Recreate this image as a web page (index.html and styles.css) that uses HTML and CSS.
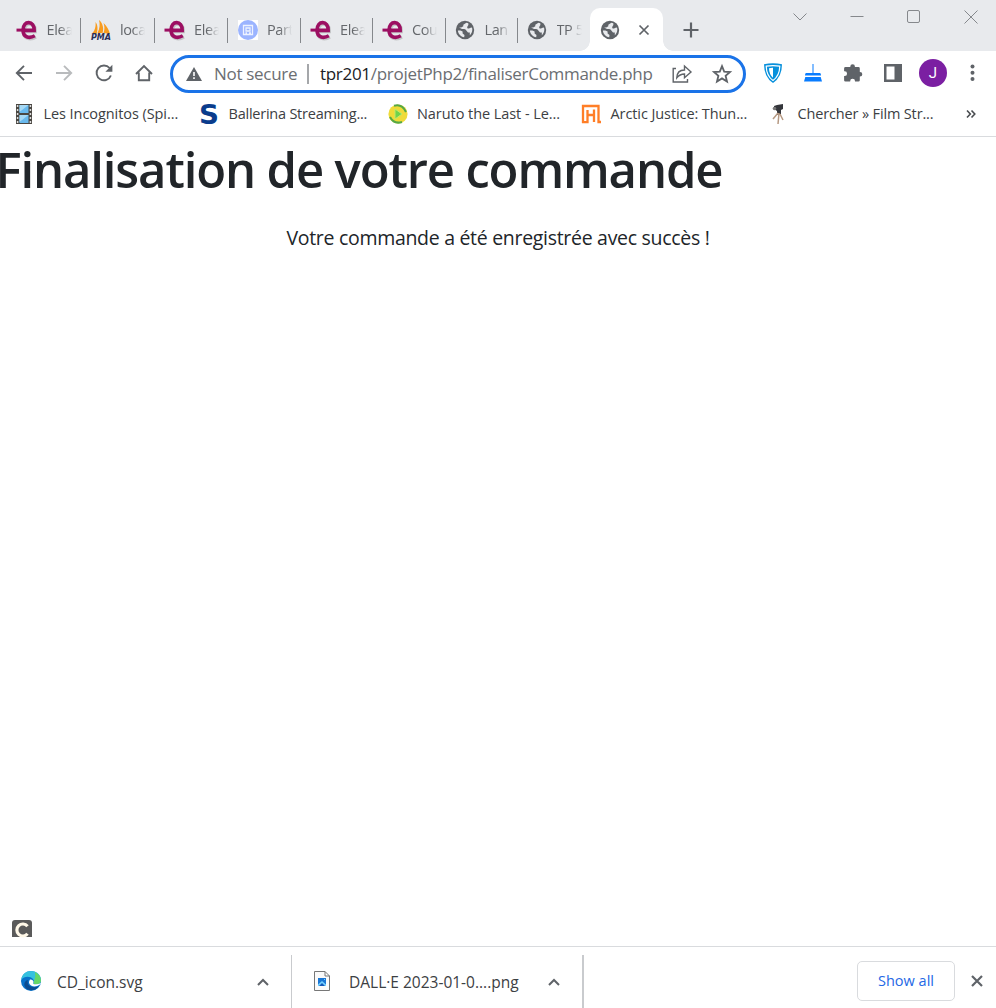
FILE: index.html
```html
<!DOCTYPE html>
<html lang="fr">
<head>
<meta charset="utf-8">
<title>Finalisation de votre commande</title>
<link rel="stylesheet" href="styles.css">
</head>
<body>
<svg class="defs" width="0" height="0">
  <symbol id="elea" viewBox="0 0 22 22">
    <g fill="none" stroke="#999" stroke-opacity=".45" transform="translate(.8 1)"><path d="M7 11.200H18.200C18.600 1.200 7 1.200 7 11.200C7 19.500 14.500 19.500 19 16.800" stroke-width="4"/></g>
    <g fill="none" stroke="#9c0f62"><path d="M6.500 11.400H18.200C18.600 1.400 7 .8 7 11.100C7 19.500 14.300 19.300 18.800 16.800" stroke-width="3.600"/><path d="M.5 11.100h9" stroke-width="3"/></g>
  </symbol>
  <symbol id="globe" viewBox="0 0 20 20">
    <circle cx="10" cy="10" r="9.200" fill="#5f6368"/>
    <path fill="#e8eaed" d="M11.400 2.700L8.300 4.700V6.300L6.200 7.600H4.100L7 9.100C8.800 9 10.500 9 11.500 10.800L13 12.600H14.800V15.300C17.700 12.300 17.700 8.700 16.800 7.400C15 7.400 14.800 8.500 13.100 8.600C11.700 8.600 12 6.500 13.400 5.100L13.300 3.300ZM2.900 10.600C3 13.800 5.700 16.800 9.200 17.300L9.500 14.900L7.600 13.600V11.500L5.400 10.600Z"/>
  </symbol>
  <symbol id="caret" viewBox="0 0 12 8"><path d="M1 7L6 2L11 7" fill="none" stroke="#5f6368" stroke-width="2"/></symbol>
</svg>
<div class="window">
  <header class="tabstrip">
    <div class="tabs">
      <div class="tab first"><svg class="fav"><use href="#elea"/></svg><span class="label">Elea</span></div>
      <div class="tab"><svg class="fav" viewBox="0 0 22 22"><path fill="#f89c1f" d="M1.500 15C5 12 6 7 5.500 3C8 6 8 11 6.500 15ZM7.500 14C10 9 10 5 9 1C13 4 14 10 12.500 14ZM13.500 14C15 10 14.500 7 13.500 4C17 7 19 11 20 15Z"/><text class="pma" x="1" y="21" textLength="20" lengthAdjust="spacingAndGlyphs">PMA</text></svg><span class="label">loca</span></div>
      <div class="tab"><svg class="fav"><use href="#elea"/></svg><span class="label">Elea</span></div>
      <div class="tab"><svg class="fav" viewBox="0 0 22 22"><path fill="#fff" d="M1 1h20v20H1z"/><circle cx="11" cy="11" r="10" fill="#9bb4ff"/><path fill="none" stroke="#edf2ff" stroke-width="1.300" d="M6.500 6.500h9v9h-9zM9 9h4v3H9zM8.500 14h1.500M12 14h2"/></svg><span class="label">Part</span></div>
      <div class="tab"><svg class="fav"><use href="#elea"/></svg><span class="label">Elea</span></div>
      <div class="tab"><svg class="fav"><use href="#elea"/></svg><span class="label">Cou</span></div>
      <div class="tab"><svg class="fav globe"><use href="#globe"/></svg><span class="label">Lan</span></div>
      <div class="tab last"><svg class="fav globe"><use href="#globe"/></svg><span class="label">TP 5</span></div>
      <div class="tab active"><svg class="fav globe"><use href="#globe"/></svg><svg class="close" viewBox="0 0 12 12"><path d="M1.500 1.500l9 9M10.500 1.500l-9 9" stroke="#5f6368" stroke-width="1.700"/></svg></div>
    </div>
    <svg class="plus" viewBox="0 0 16 16"><path d="M8 .5v15M.5 8h15" stroke="#5f6368" stroke-width="2.200"/></svg>
    <div class="controls">
      <svg viewBox="0 0 14 14"><path d="M.5 3.500L7 10L13.500 3.500"/></svg>
      <svg viewBox="0 0 14 14"><path d="M.5 6.500h13"/></svg>
      <svg viewBox="0 0 14 14"><rect x=".5" y=".5" width="12" height="12" rx="1.500"/></svg>
      <svg viewBox="0 0 14 14"><path d="M.5 .5l13 13M13.500 .5l-13 13"/></svg>
    </div>
  </header>
  <div class="toolbar">
    <div class="nav">
      <svg viewBox="0 0 20 20"><path d="M18 10H3M10 2.800L2.800 10L10 17.200"/></svg>
      <svg class="disabled" viewBox="0 0 20 20"><path d="M2 10h15M10 2.800L17.200 10L10 17.200"/></svg>
      <svg viewBox="0 0 20 20"><path d="M16.900 12.500A7.400 7.400 0 1 1 15.600 5"/><path d="M18.400 1.800v7h-7z" fill="#5f6368" stroke="none"/></svg>
      <svg viewBox="0 0 20 20"><path d="M2 11L10 3L18 11M4.800 9.500V17.300H15.200V9.500"/></svg>
    </div>
    <div class="omnibox">
      <svg class="warn" viewBox="0 0 16 14"><path d="M8 0L16 14H0z" fill="#5f6368"/><path d="M8 5v4M8 10.300v1.700" stroke="#fff" stroke-width="1.600"/></svg>
      <span class="secure">Not secure</span><i class="bar"></i>
      <span class="url"><b>tpr201</b>/projetPhp2/finaliserCommande.php</span>
      <svg class="share" viewBox="0 0 20 20"><path d="M4 4.500H1.200V18H15.500V15M4.800 13.800C5 8.500 8 6 12.500 6V2L19 8L12.500 13.800V10C9 10 7 11 4.800 13.800Z"/></svg>
      <svg class="star" viewBox="0 0 20 20"><path d="M10 2.200L12.200 7.600L18 8L13.600 11.800L15 17.500L10 14.400L5 17.500L6.400 11.800L2 8L7.800 7.600Z"/></svg>
    </div>
    <div class="extensions">
      <svg viewBox="0 0 20 20"><path fill="#0790dc" d="M1 1.200Q10-.5 19 1.200Q19 14 10 20Q1 14 1 1.200Z"/><path d="M3.200 3.200Q10 2 16.800 3.200Q16.500 13 10 17.400Q3.500 13 3.200 3.200Z" fill="none" stroke="#fff" stroke-width="1.200"/><path fill="#fff" d="M6 5.200Q8 4.600 10 4.700V14.700Q6 11 6 5.200Z"/></svg>
      <svg viewBox="0 0 20 20"><path fill="#087cff" d="M9.500 1h1v9H17q1 0 1 2.500H2Q2 10 3 10h6.500zM2.300 14h15.400l1.300 4.500H1z"/></svg>
      <svg viewBox="0 0 20 20"><path fill="#5f6368" d="M7.300 3.600a2.300 2.300 0 0 1 4.600 0v.5h3.500q1.400 0 1.400 1.400v3.500h.2a2.300 2.300 0 0 1 0 4.600h-.2v3.600q0 1.400-1.400 1.400H12v-.5a2.400 2.400 0 0 0-4.800 0v.5H2.500q-1.400 0-1.400-1.400V13h.6a2.300 2.300 0 0 0 0-4.700h-.6V5.500q0-1.400 1.400-1.400h4.800z"/></svg>
      <svg viewBox="0 0 20 20"><path fill="#5f6368" fill-rule="evenodd" d="M1 1h18v18H1zM3.500 3.500v13h8v-13z"/></svg>
      <span class="avatar">J</span>
      <svg viewBox="0 0 20 20" fill="#5f6368"><circle cx="9.500" cy="3.500" r="2"/><circle cx="9.500" cy="9.700" r="2"/><circle cx="9.500" cy="16" r="2"/></svg>
    </div>
  </div>
  <nav class="bookmarks">
    <a><svg viewBox="0 0 20 20"><path fill="#4a4742" d="M2 0h16v20H2z"/><path fill="#69b9ed" d="M5.500 1h9v8h-9zM5.500 11h9v8h-9z"/><path fill="#a6d9f5" d="M5.500 1h9l-9 7zM5.500 11h9l-9 7z"/><path d="M3.600 1v19M16.400 1v19" stroke="#ddd" stroke-width="1.500" stroke-dasharray="2 2"/></svg><span class="b1">Les Incognitos (Spi...</span></a>
    <a><svg viewBox="0 0 20 20"><text class="s-logo" x="0" y="19.500" textLength="20" lengthAdjust="spacingAndGlyphs">S</text></svg><span class="b2">Ballerina Streaming...</span></a>
    <a><svg viewBox="0 0 20 20"><circle cx="10" cy="10" r="9.600" fill="#efdb38"/><path fill="none" stroke="#55a846" stroke-width="2" d="M6 1.800Q14-.5 18 8M2 13Q6 20.500 14 18"/><path fill="#6fd34b" stroke="#bfe96a" d="M7 5l7 5-7 5z"/></svg><span class="b3">Naruto the Last - Le...</span></a>
    <a><svg viewBox="0 0 20 20"><path d="M2 19V2H17.500V18H20M1 18.200H6.500V6M6.500 11H13M13 5.500V18" fill="none" stroke="#ff7e27" stroke-width="2.300"/></svg><span class="b4">Arctic Justice: Thun...</span></a>
    <a><svg viewBox="0 0 20 20"><path fill="#34363b" d="M6 2l3-1 6-1v5l-2 1v4l-4 1V7L6 5z"/><path d="M10 9l-5 6M11 9l-1 11M12 10l3 6" stroke="#b69983" stroke-width="1.500"/><circle cx="6.500" cy="4.500" r="1.800" fill="#777"/></svg><span class="b5">Chercher » Film Str...</span></a>
    <svg class="more" viewBox="0 0 10 10"><path d="M1 1.500L4.300 5L1 8.500M5.500 1.500L8.800 5L5.500 8.500" fill="none" stroke="#494c50" stroke-width="1.600"/></svg>
  </nav>
  <main class="page">
    <h1>Finalisation de votre commande</h1>
    <p>Votre commande a été enregistrée avec succès !</p>
    <svg class="badge" viewBox="0 0 20 17"><path fill="#5a5a5a" d="M0 17V3Q0 0 3 0H17Q20 0 20 3V17z"/><path d="M15.500 6.200A6 6 0 1 0 15.500 13.800" fill="none" stroke="#fff8e8" stroke-width="3.200"/></svg>
  </main>
  <footer class="downloads">
    <div class="file"><svg class="file-icon" viewBox="0 0 20 20"><circle cx="10" cy="10" r="10" fill="#0872ca"/><path fill="#35c1df" d="M.2 9C1 3 5 0 10 0C16 0 20 4 20 9C20 13 16 14 13 13C12 12 14 11 12 8C9 5 3 5 .2 9Z"/><path fill="#65d768" d="M14 1Q20 4 20 10Q19 14 13 13Q12 12 13 10Q15 6 14 1Z"/><path fill="#0c4c91" d="M7 9C5 15 12 18 18 15C15 20 7 21 4 16C2 12 5 9 7 9Z"/><path fill="#fff" d="M9 8.500Q6.500 12 10 14.500Q14 17 19 13.500L20 12Q16 14 12.500 13Q12 12 12.500 10.500Q11.500 8 9 8.500Z"/></svg><span class="f1">CD_icon.svg</span><svg class="caret"><use href="#caret"/></svg></div>
    <div class="file second"><svg class="file-icon" viewBox="0 0 20 20"><path d="M2.500 .5H13L17.500 5V19.500H2.500zM13 .5V5h4.500" fill="#fafafa" stroke="#777"/><path fill="#1976d5" d="M6 7h8v8H6z"/><path fill="#75d1ff" d="M6 15v-1.500l4-3.500 4 3.500V15zM12 8h1v1h-1z"/><path fill="#1458b8" d="M7 15l3-3 3 3z"/></svg><span class="f2">DALL·E 2023-01-0....png</span><svg class="caret"><use href="#caret"/></svg></div>
    <button>Show all</button>
    <svg class="dismiss" viewBox="0 0 12 12"><path d="M1 1l10 10M11 1L1 11" stroke="#5f6368" stroke-width="2.200"/></svg>
  </footer>
</div>
</body>
</html>
```
FILE: styles.css
```css
* { box-sizing: border-box; }
body { margin: 0; background: #fff; font-family: "Open Sans", "Noto Sans", sans-serif; color: #3c4043; }
svg { display: block; flex: none; overflow: visible; }
.defs { position: absolute; }
.window { width: 996px; height: 1008px; display: flex; flex-direction: column; overflow: hidden; }

.tabstrip { height: 51px; background: #e8eaed; display: flex; padding: 8px 0 0 8px; flex: none; }
.tabs { display: grid; grid-template-columns: 73px 74px 73px 73px 72px 73px 72px 72px 73px; }
.tab { height: 43px; display: flex; align-items: center; padding-left: 8.500px; position: relative; }
.tab.first { padding-left: 8px; }
.tab::after { content: ""; position: absolute; right: 0; top: 10px; width: 1px; height: 25px; background: #85888c; }
.tab.last::after { display: none; }
.fav { width: 22px; height: 22px; margin-right: 8.500px; }
.fav.globe { width: 20px; height: 20px; margin: 0 9.500px 0 .5px; }
.label { width: 25px; white-space: nowrap; font-size: 14.500px; color: #64676b; letter-spacing: -.4px; mask-image: linear-gradient(90deg, #000 50%, transparent); }
.tab.active { background: #fff; border-radius: 10px 10px 0 0; padding-left: 9.500px; }
.tab.active::before, .tab.active::after { content: ""; position: absolute; top: auto; bottom: 0; width: 10px; height: 10px; }
.tab.active::before { left: -10px; background: radial-gradient(circle at 0 0, #e8eaed 9.500px, #fff 10px); }
.tab.active::after { right: -10px; background: radial-gradient(circle at 100% 0, #e8eaed 9.500px, #fff 10px); }
.close { width: 12px; height: 12px; margin-left: 8px; }
.plus { width: 16px; height: 16px; margin: 14px 0 0 20px; }
.controls { margin: 2px 18.500px 0 auto; display: flex; gap: 43px; }
.controls svg { width: 14px; height: 14px; fill: none; stroke: #85888c; }
.pma { font: italic bold 8px "DejaVu Sans", sans-serif; fill: #2b2e57; }

.toolbar { height: 45px; display: flex; align-items: center; flex: none; }
.nav { display: flex; gap: 20px; width: 170px; padding-left: 13.500px; margin-top: -1px; }
.nav svg { width: 20px; height: 20px; fill: none; stroke: #5f6368; stroke-width: 1.900; }
.nav .disabled { stroke: #b9bbbd; }
.omnibox { width: 576px; height: 38px; border: 3px solid #1a73e8; border-radius: 19px; display: flex; align-items: center; font-size: 17px; color: #6b6e72; padding-left: 13px; white-space: nowrap; }
.warn { width: 16px; height: 14px; }
.secure { width: 93px; margin-left: 12px; letter-spacing: -.3px; }
.bar { width: 2px; height: 20px; background: #a5a7aa; margin-right: 11px; }
.url { width: 352px; letter-spacing: -.3px; }
.url b { color: #202124; font-weight: 400; }
.share, .star { width: 20px; height: 20px; fill: none; stroke: #5f6368; stroke-width: 1.400; }
.star { margin-left: 20px; stroke-width: 1.800; }
.extensions { display: flex; align-items: center; gap: 20px; margin: -1px 0 0 16.500px; }
.extensions svg { width: 20px; height: 20px; }
.avatar { width: 28px; height: 28px; border-radius: 50%; background: #7b1fa2; color: #fff; font: 15px/28px Roboto, sans-serif; text-align: center; margin: 0 -3.500px; }
.extensions .avatar + svg { margin-left: -1px; }

.bookmarks { height: 41px; border-bottom: 1px solid #d9dbde; display: grid; grid-template-columns: 185px 188.500px 193.500px 187px 184px 30px; padding-left: 14px; padding-bottom: 5px; align-items: center; flex: none; font-size: 14.500px; }
.bookmarks a { display: flex; align-items: center; gap: 9.500px; white-space: nowrap; }
.bookmarks a svg { width: 20px; height: 20px; }
.b1 { letter-spacing: -.07px; }
.b2 { letter-spacing: -.23px; }
.b3 { letter-spacing: -.06px; }
.b4 { letter-spacing: -.09px; }
.b5 { letter-spacing: -.15px; }
.more { width: 10px; height: 10px; margin-left: 14px; }
.s-logo { font: bold 26px "DejaVu Sans", sans-serif; fill: #0a3c8c; }

.page { flex: 1; color: #212529; position: relative; }
h1 { margin: 0 0 22px; font-size: 49px; font-weight: 600; line-height: 64px; letter-spacing: -1.130px; white-space: nowrap; margin-left: -4.500px; }
p { margin: 0; font-size: 19.500px; line-height: 30px; text-align: center; letter-spacing: -.3px; }
.badge { position: absolute; left: 12px; bottom: 9px; width: 20px; height: 17px; }

.downloads { height: 62px; border-top: 1px solid #d9dbde; display: flex; align-items: center; padding-top: 8px; flex: none; font-size: 15.500px; }
.file { width: 292px; height: 54px; border-right: 1px solid #c9cbce; display: flex; align-items: center; padding: 0 22px 0 21px; white-space: nowrap; }
.file.second { border-right: 2px solid #c9cbce; padding-left: 20px; }
.file-icon { width: 20px; height: 20px; margin: -2px 16px 0 0; }
.second .file-icon { margin-right: 17px; }
.caret { width: 12px; height: 8px; margin-left: auto; }
button { width: 98px; height: 40px; margin: -2px 16px 0 auto; border: 1px solid #d9dbde; border-radius: 5px; background: #fff; color: #2468e5; font: 500 14.500px "Open Sans", sans-serif; padding: 0; }
.dismiss { width: 12px; height: 12px; margin: -2px 13px 0 0; }
```
